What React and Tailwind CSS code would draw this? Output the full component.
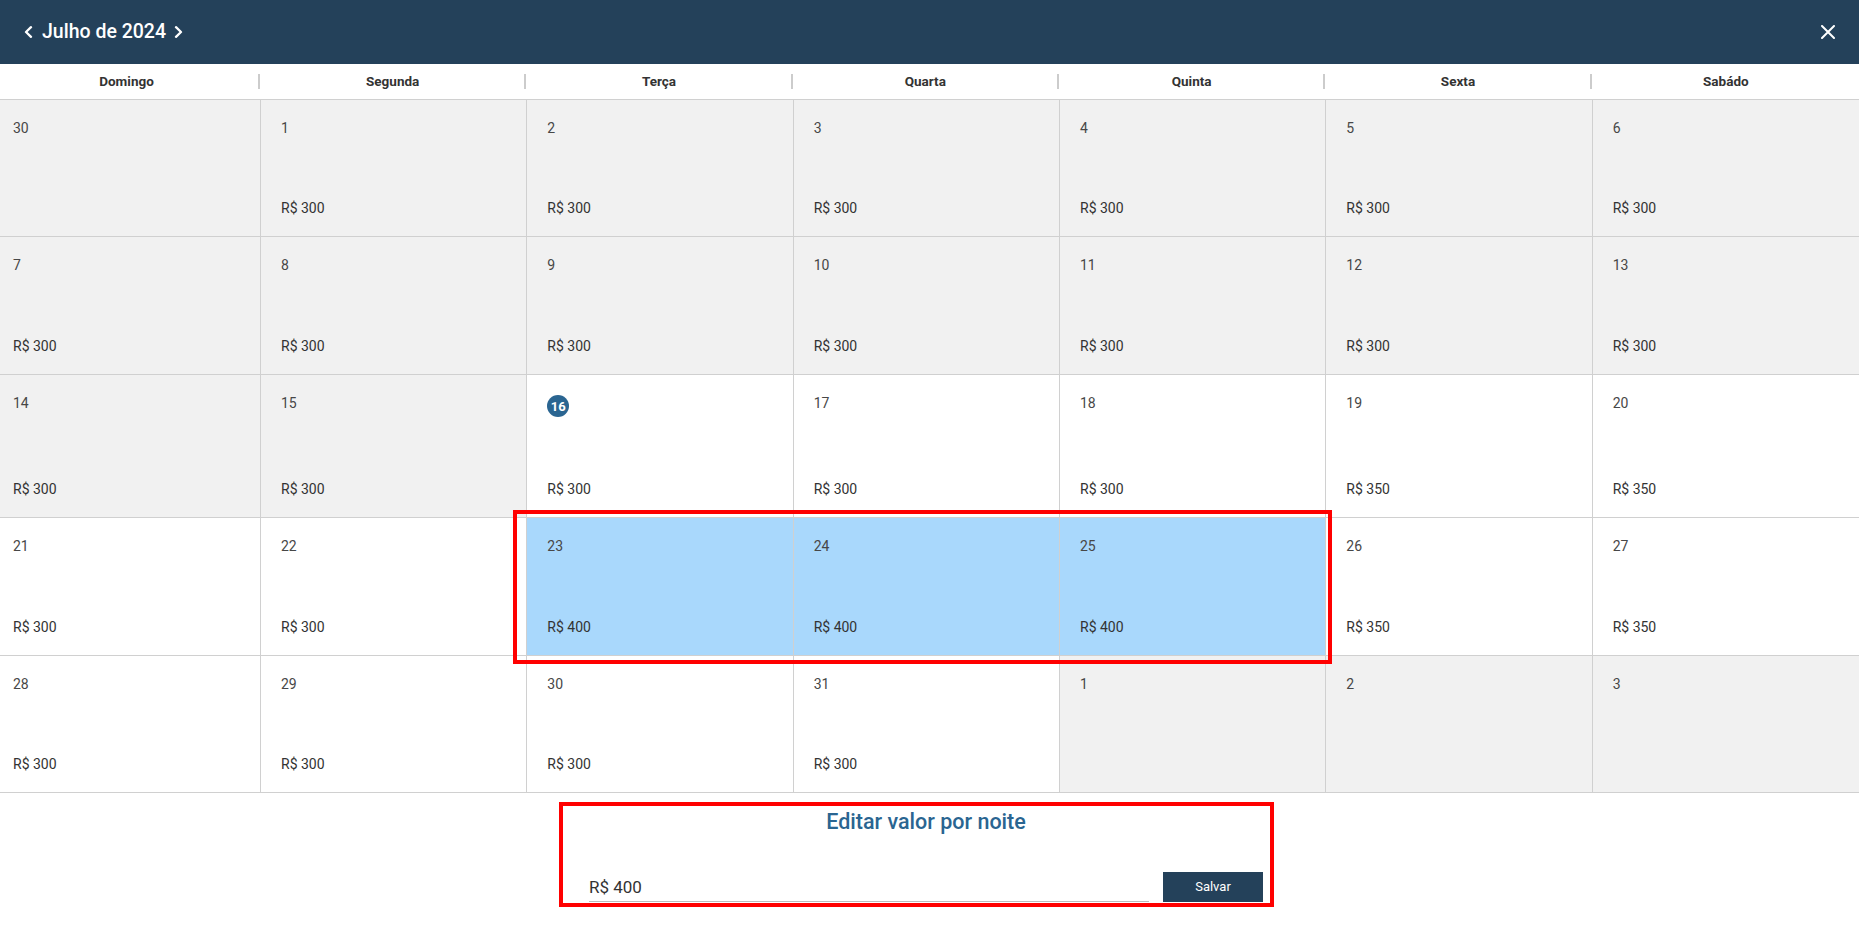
import React from "react";

const DAYS = ["Domingo", "Segunda", "Terça", "Quarta", "Quinta", "Sexta", "Sabádo"];

// type: g = gray (outside/past), w = white, b = blue (selected), t = today
const ROWS = [
  { h: "h-[137px]", cells: [["30", "g", null], ["1", "g", "300"], ["2", "g", "300"], ["3", "g", "300"], ["4", "g", "300"], ["5", "g", "300"], ["6", "g", "300"]] },
  { h: "h-[138px]", cells: [["7", "g", "300"], ["8", "g", "300"], ["9", "g", "300"], ["10", "g", "300"], ["11", "g", "300"], ["12", "g", "300"], ["13", "g", "300"]] },
  { h: "h-[143px]", cells: [["14", "g", "300"], ["15", "g", "300"], ["16", "t", "300"], ["17", "w", "300"], ["18", "w", "300"], ["19", "w", "350"], ["20", "w", "350"]] },
  { h: "h-[138px]", cells: [["21", "w", "300"], ["22", "w", "300"], ["23", "b", "400"], ["24", "b", "400"], ["25", "b", "400"], ["26", "w", "350"], ["27", "w", "350"]] },
  { h: "h-[137px]", cells: [["28", "w", "300"], ["29", "w", "300"], ["30", "w", "300"], ["31", "w", "300"], ["1", "g", null], ["2", "g", null], ["3", "g", null]] },
];

function Cell({ day, type, price, col }) {
  const bg = type === "g" ? "bg-[#f1f1f1]" : type === "b" ? "bg-[#a9d8fc]" : "bg-white";
  const border = col < 6 ? "border-r border-[#d0d0d0]" : "";
  const pad = col === 0 ? "pl-[13px]" : "pl-[20px]";
  return (
    <div className={`${bg} ${border} ${pad} border-b border-b-[#d0d0d0] flex flex-col justify-between pt-[16px] pb-[16px]`}>
      {type === "t" ? (
        <div className="h-[24px]">
          <div className="mt-[4px] w-[22px] h-[22px] rounded-full bg-[#2a6591] text-white text-[13px] font-bold flex items-center justify-center leading-none">
            {day}
          </div>
        </div>
      ) : (
        <div className="text-[14px] leading-[24px] text-[#474747]">{day}</div>
      )}
      {price ? (
        <div className="text-[14px] leading-[24px] text-[#333333]">R$ {price}</div>
      ) : (
        <div className="h-[24px]" />
      )}
    </div>
  );
}

export default function App() {
  return (
    <div className="w-full min-h-screen bg-white font-[Roboto,sans-serif]">
      {/* Top bar */}
      <div className="h-[64px] bg-[#24415a] flex items-center justify-between pl-[24px] pr-[24px]">
        <div className="flex items-center text-white">
          <svg width="9" height="12" viewBox="0 0 9 12" className="mr-[9px]">
            <polyline points="7,1.2 2,6 7,10.8" fill="none" stroke="white" strokeWidth="2.3" strokeLinecap="round" strokeLinejoin="round" />
          </svg>
          <span className="text-[19.5px] font-medium leading-none">Julho de 2024</span>
          <svg width="9" height="12" viewBox="0 0 9 12" className="ml-[8px]">
            <polyline points="2,1.2 7,6 2,10.8" fill="none" stroke="white" strokeWidth="2.3" strokeLinecap="round" strokeLinejoin="round" />
          </svg>
        </div>
        <svg width="14" height="14" viewBox="0 0 14 14">
          <path d="M1 1L13 13M13 1L1 13" stroke="white" strokeWidth="2" strokeLinecap="round" />
        </svg>
      </div>

      {/* Weekday header */}
      <div className="grid grid-cols-[261px_repeat(6,minmax(0,1fr))] h-[36px] border-b border-[#d0d0d0]">
        {DAYS.map((d, i) => (
          <div key={d} className="flex items-center">
            <div className={`flex-1 text-center text-[13.5px] font-bold text-[#333333] ${i === 0 ? "pr-[5px]" : ""}`}>{d}</div>
            {i < 6 && <div className="w-[2px] h-[15px] bg-[#cccccc] mr-[1px]" />}
          </div>
        ))}
      </div>

      {/* Calendar grid */}
      <div className="relative">
        {ROWS.map((row, ri) => (
          <div key={ri} className={`grid grid-cols-[261px_repeat(6,minmax(0,1fr))] ${row.h}`}>
            {row.cells.map(([day, type, price], ci) => (
              <Cell key={ci} day={day} type={type} price={price} col={ci} />
            ))}
          </div>
        ))}
        {/* selection highlight annotation */}
        <div className="absolute left-[513px] top-[410px] w-[819px] h-[154px] border-4 border-[#ff0000] pointer-events-none" />
      </div>

      {/* Edit panel */}
      <div className="mt-[9px] ml-[559px] w-[715px] h-[105px] border-4 border-[#ff0000] flex flex-col justify-between">
        <div className="mt-[2px] pl-[19px] text-center text-[21.5px] font-medium leading-[28px] text-[#2a6591]">
          Editar valor por noite
        </div>
        <div className="flex items-end gap-[14px] pl-[26px] pr-[7px] mb-[1px]">
          <input
            defaultValue="R$ 400"
            className="flex-1 h-[29px] border-b border-[#bbbbbb] bg-transparent outline-none text-[17px] text-[#333333] leading-[28px]"
          />
          <button className="w-[100px] h-[30px] bg-[#24415a] text-white text-[13px]">Salvar</button>
        </div>
      </div>
    </div>
  );
}
